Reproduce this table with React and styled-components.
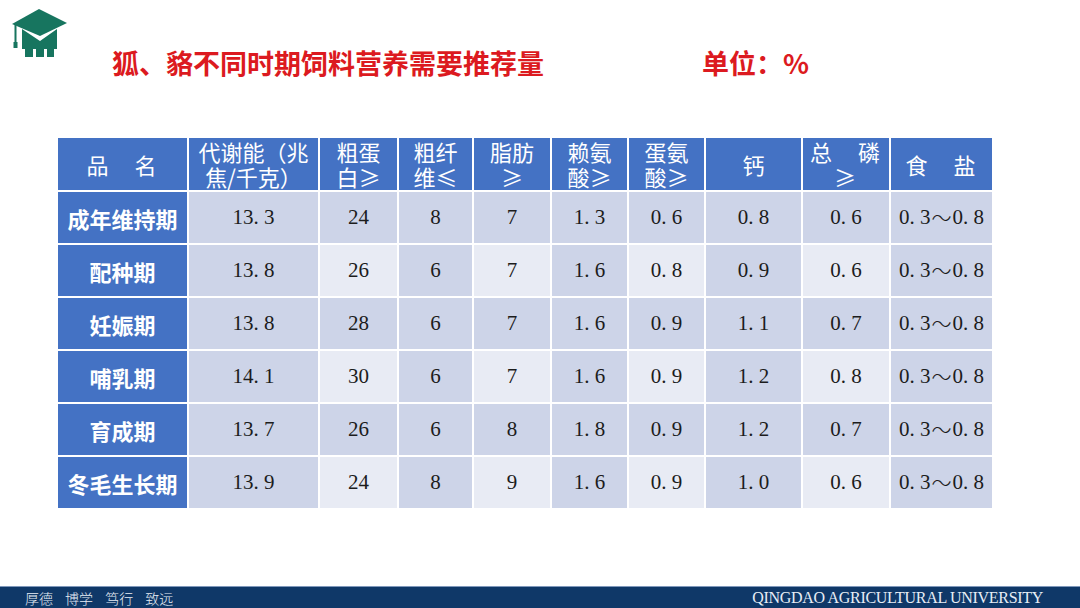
import React from "react";
import styled, { createGlobalStyle } from "styled-components";

const Global = createGlobalStyle`
  html, body { margin: 0; padding: 0; background: #ffffff; }
  body { font-family: "Noto Sans CJK SC", "Noto Sans", sans-serif; }
`;

const Page = styled.div`
  width: 1080px;
  height: 608px;
  display: flex;
  flex-direction: column;
  background: #ffffff;
  overflow: hidden;
`;

const Header = styled.header`
  display: flex;
  align-items: flex-start;
  padding: 5px 0 0 10px;
  height: 138px;
  box-sizing: border-box;
`;

const Logo = styled.svg`
  width: 60px;
  height: 55px;
  flex: none;
`;

const TitleRow = styled.div`
  display: flex;
  align-items: center;
  margin: 42px 0 0 42px;
  gap: 158px;
`;

const Title = styled.h1`
  margin: 0;
  font-family: "Noto Sans CJK SC", sans-serif;
  font-weight: 700;
  font-size: 27px;
  line-height: 32px;
  color: #dc1a20;
  white-space: nowrap;
`;

const Grid = styled.div`
  margin-left: 58px;
  width: 934px;
  display: grid;
  grid-template-columns: 129px 129px 77px 73px 76px 75px 75px 95px 86px 101px;
  grid-template-rows: 52px repeat(6, 51px);
  gap: 2px;
  background: #ffffff;
`;

const HeadCell = styled.div`
  background: #4472c4;
  color: #ffffff;
  font-family: "Noto Sans CJK SC", sans-serif;
  font-size: 22px;
  line-height: 25px;
  letter-spacing: ${(p) => (p.$wide ? "2px" : "0")};
  display: flex;
  flex-direction: column;
  align-items: center;
  justify-content: center;
  text-align: center;
  white-space: pre;
`;

const RowHead = styled.div`
  background: #4472c4;
  color: #ffffff;
  font-family: "Noto Sans CJK SC", sans-serif;
  font-weight: 700;
  font-size: 22px;
  display: flex;
  align-items: center;
  justify-content: center;
  white-space: nowrap;
`;

const DataCell = styled.div`
  background: ${(p) => (p.$dark ? "#cdd4e8" : "#e8ebf4")};
  color: #1c1c1c;
  font-family: "Liberation Serif", "DejaVu Serif", serif;
  font-size: 21px;
  display: flex;
  align-items: center;
  justify-content: center;
  white-space: nowrap;
`;

const Dot = styled.span`
  display: inline-block;
  width: 0.5em;
  text-align: left;
`;

const Wave = styled.span`
  font-family: "Noto Sans CJK SC", sans-serif;
  font-weight: 300;
  font-size: 20px;
  margin: 0 1px;
`;

const Spacer = styled.div`
  flex: 1;
`;

const Footer = styled.footer`
  height: 22px;
  background: #0f3868;
  border-top: 1px solid #7f98bb;
  display: flex;
  align-items: center;
  justify-content: space-between;
  padding: 0 37px 0 25px;
  box-sizing: border-box;
  color: #e8eef6;
`;

const Motto = styled.span`
  font-family: "Noto Sans CJK SC", sans-serif;
  font-size: 14px;
  font-weight: 300;
  word-spacing: 9px;
`;

const University = styled.span`
  font-family: "Liberation Serif", serif;
  font-size: 16px;
  letter-spacing: -0.3px;
`;

const headers = [
  { t: "品\u3000名", wide: true },
  { t: "代谢能（兆\n焦/千克）" },
  { t: "粗蛋\n白≥" },
  { t: "粗纤\n维≤" },
  { t: "脂肪\n≥" },
  { t: "赖氨\n酸≥" },
  { t: "蛋氨\n酸≥" },
  { t: "钙" },
  { t: "总\u3000磷\n≥", wide: true },
  { t: "食\u3000盐", wide: true },
];

const rows = [
  ["成年维持期", "13.3", "24", "8", "7", "1.3", "0.6", "0.8", "0.6", "0.3～0.8"],
  ["配种期", "13.8", "26", "6", "7", "1.6", "0.8", "0.9", "0.6", "0.3～0.8"],
  ["妊娠期", "13.8", "28", "6", "7", "1.6", "0.9", "1.1", "0.7", "0.3～0.8"],
  ["哺乳期", "14.1", "30", "6", "7", "1.6", "0.9", "1.2", "0.8", "0.3～0.8"],
  ["育成期", "13.7", "26", "6", "8", "1.8", "0.9", "1.2", "0.7", "0.3～0.8"],
  ["冬毛生长期", "13.9", "24", "8", "9", "1.6", "0.9", "1.0", "0.6", "0.3～0.8"],
];

function Num({ value }) {
  const parts = [];
  [...value].forEach((ch, i) => {
    if (ch === ".") parts.push(<Dot key={i}>.</Dot>);
    else if (ch === "～") parts.push(<Wave key={i}>～</Wave>);
    else parts.push(ch);
  });
  return <>{parts}</>;
}

function CapLogo() {
  return (
    <Logo viewBox="0 0 60 55">
      <polygon points="29,4 57,18 30,31 2,19" fill="#17755f" />
      <polygon
        points="12,24 30,36 47,24 47,44 44,44 44,52 37,52 37,44 34,44 34,52 26,52 26,44 23,44 23,52 15,52 15,44 12,44"
        fill="#17755f"
      />
      <rect x="4.5" y="19" width="2" height="20" fill="#17755f" />
      <rect x="3.5" y="37" width="4" height="6" fill="#17755f" />
    </Logo>
  );
}

export default function App() {
  return (
    <>
      <Global />
      <Page>
        <Header>
          <CapLogo />
          <TitleRow>
            <Title>狐、貉不同时期饲料营养需要推荐量</Title>
            <Title>单位：%</Title>
          </TitleRow>
        </Header>
        <Grid>
          {headers.map((h, i) => (
            <HeadCell key={i} $wide={h.wide}>
              {h.t}
            </HeadCell>
          ))}
          {rows.map((r, ri) =>
            r.map((v, ci) =>
              ci === 0 ? (
                <RowHead key={`${ri}-${ci}`}>{v}</RowHead>
              ) : (
                <DataCell
                  key={`${ri}-${ci}`}
                  $dark={ri % 2 === 0 || ci % 2 === 1}
                >
                  <Num value={v} />
                </DataCell>
              )
            )
          )}
        </Grid>
        <Spacer />
        <Footer>
          <Motto>厚德 博学 笃行 致远</Motto>
          <University>QINGDAO AGRICULTURAL UNIVERSITY</University>
        </Footer>
      </Page>
    </>
  );
}
